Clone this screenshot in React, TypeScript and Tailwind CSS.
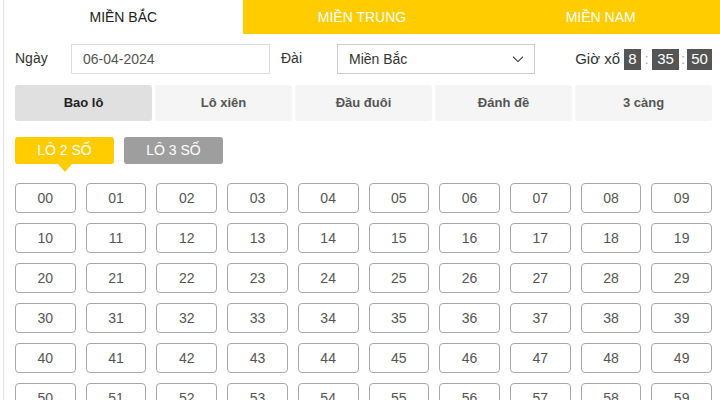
import { useState } from 'react';

const REGIONS = ['MIỀN BẮC', 'MIỀN TRUNG', 'MIỀN NAM'];
const GAME_TABS = ['Bao lô', 'Lô xiên', 'Đầu đuôi', 'Đánh đề', '3 càng'];

function ChevronDown() {
  return (
    <svg className="w-4 h-4 text-[#444]" fill="none" stroke="currentColor" viewBox="0 0 24 24">
      <path strokeLinecap="round" strokeLinejoin="round" strokeWidth={1.6} d="M5 9l7 7 7-7" />
    </svg>
  );
}

export default function App() {
  const [region, setRegion] = useState(0);
  const [tab, setTab] = useState(0);
  const [mode, setMode] = useState(2);
  const numbers = Array.from({ length: 100 }, (_, i) => String(i).padStart(2, '0'));

  return (
    <div className="w-[720px] h-[400px] overflow-hidden bg-white font-['Liberation_Sans',Arial,sans-serif]">
      <div className="ml-[3px] border-l border-[#e3e3e3] min-h-full">
        {/* Region tabs */}
        <div className="grid grid-cols-3 h-[34px]">
          {REGIONS.map((r, i) => (
            <button
              key={r}
              onClick={() => setRegion(i)}
              className={`text-[14px] flex items-center justify-center ${
                region === i ? 'bg-white text-[#222]' : 'bg-[#ffcc00] text-white'
              }`}
            >
              {r}
            </button>
          ))}
        </div>

        <div className="pl-[11px] pr-[8px]">
          {/* Date / station / time */}
          <div className="mt-[10px] flex items-center justify-between h-[30px]">
            <div className="flex items-center">
              <span className="text-[14px] text-[#333] w-[56px] -mt-[2px]">Ngày</span>
              <div className="w-[199px] h-[30px] border border-[#ddd] flex items-center pl-[11px] text-[14px] text-[#555]">
                06-04-2024
              </div>
              <span className="text-[14px] text-[#333] ml-[11px] w-[56px] -mt-[2px]">Đài</span>
              <div className="w-[198px] h-[30px] border border-[#ccc] flex items-center justify-between pl-[11px] pr-[8px] text-[14px] text-[#333]">
                <span>Miền Bắc</span>
                <ChevronDown />
              </div>
            </div>
            <div className="flex items-center text-[15px] text-[#333]">
              <span className="mr-[4px]">Giờ xổ</span>
              <span className="bg-[#555] text-white h-[21px] w-[17px] flex items-center justify-center">8</span>
              <span className="text-[#aaa] w-[11px] text-center">:</span>
              <span className="bg-[#555] text-white h-[21px] w-[27px] flex items-center justify-center">35</span>
              <span className="text-[#aaa] w-[8px] text-center">:</span>
              <span className="bg-[#555] text-white h-[21px] w-[25px] flex items-center justify-center">50</span>
            </div>
          </div>

          {/* Game tabs */}
          <div className="mt-[11px] grid grid-cols-5 gap-[3px]">
            {GAME_TABS.map((t, i) => (
              <button
                key={t}
                onClick={() => setTab(i)}
                className={`h-[36px] rounded-[3px] text-[13px] font-bold ${
                  tab === i ? 'bg-[#e0e0e0] text-[#222]' : 'bg-[#f5f5f5] text-[#555]'
                }`}
              >
                {t}
              </button>
            ))}
          </div>

          {/* Lo 2 / Lo 3 */}
          <div className="mt-[16px] flex gap-[10px]">
            {[2, 3].map((n) => (
              <button
                key={n}
                onClick={() => setMode(n)}
                className={`relative w-[99px] h-[27px] rounded-[3px] text-[14px] text-white ${
                  mode === n ? 'bg-[#ffcc00]' : 'bg-[#9e9e9e]'
                }`}
              >
                LÔ {n} SỐ
                {mode === n && (
                  <span className="absolute left-1/2 -translate-x-1/2 top-full w-0 h-0 border-l-[7px] border-r-[7px] border-t-[8px] border-l-transparent border-r-transparent border-t-[#ffcc00]" />
                )}
              </button>
            ))}
          </div>

          {/* Number grid */}
          <div className="mt-[19px] grid grid-cols-10 gap-x-[10px] gap-y-[10px]">
            {numbers.map((n) => (
              <button
                key={n}
                className="h-[30px] border border-[#a8a8a8] rounded-[4px] text-[14px] text-[#555] bg-white"
              >
                {n}
              </button>
            ))}
          </div>
        </div>
      </div>
    </div>
  );
}
